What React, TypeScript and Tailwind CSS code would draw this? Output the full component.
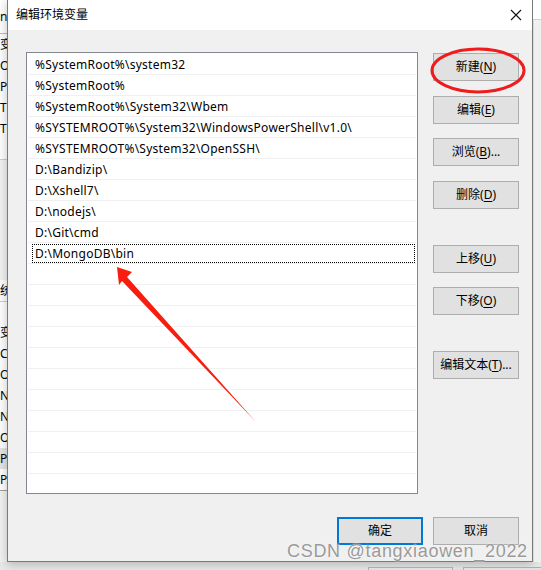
import React from 'react';

const paths = [
  '%SystemRoot%\\system32',
  '%SystemRoot%',
  '%SystemRoot%\\System32\\Wbem',
  '%SYSTEMROOT%\\System32\\WindowsPowerShell\\v1.0\\',
  '%SYSTEMROOT%\\System32\\OpenSSH\\',
  'D:\\Bandizip\\',
  'D:\\Xshell7\\',
  'D:\\nodejs\\',
  'D:\\Git\\cmd',
  'D:\\MongoDB\\bin',
];

const sideButtons = [
  { label: '新建', key: 'N', more: '', mt: 'mt-0' },
  { label: '编辑', key: 'E', more: '', mt: 'mt-[15px]' },
  { label: '浏览', key: 'B', more: '...', mt: 'mt-[14px]' },
  { label: '删除', key: 'D', more: '', mt: 'mt-[15px]' },
  { label: '上移', key: 'U', more: '', mt: 'mt-[36px]' },
  { label: '下移', key: 'O', more: '', mt: 'mt-[14px]' },
  { label: '编辑文本', key: 'T', more: '...', mt: 'mt-[36px]' },
];

const leftBits = ['变', 'Or', 'Pa', 'TE', 'TM'];
const leftBits2 = ['统', '', '变', 'Co', 'Or', 'N', 'N', 'O', 'Pa', 'PA'];

function WinButton({ label, k, more = '', primary = false, className = '' }: { label: string; k?: string; more?: string; primary?: boolean; className?: string }) {
  return (
    <div
      className={`flex h-[28px] w-[86px] items-center justify-center bg-[#e1e1e1] text-[12px] text-black ${
        primary ? 'border-2 border-[#0078d7]' : 'border border-[#adadad]'
      } ${className}`}
    >
      <span>
        {label}
        {k && (
          <>
            (<u className="underline-offset-2">{k}</u>)
          </>
        )}
        {more}
      </span>
    </div>
  );
}

export default function App() {
  return (
    <div
      className="relative flex h-[570px] w-[541px] flex-col overflow-hidden bg-[#e9e9e9]"
      style={{ fontFamily: '"Noto Sans", "Noto Sans CJK SC", sans-serif' }}
    >
      <div className="flex h-[562px]">
        {/* window behind, left edge */}
        <div className="flex w-[7px] flex-col overflow-hidden bg-white text-[12px] leading-[21px] text-black">
          <div className="h-[34px] border-b border-[#bdbdbd] pt-[6px]">n</div>
          {leftBits.map((b, i) => (
            <div key={i} className="h-[21px] whitespace-nowrap">{b}</div>
          ))}
          <div className="mt-[20px] h-px bg-[#cfcfcf]" />
          <div className="h-[120px] bg-[#f3f3f3]" />
          {leftBits2.map((b, i) => (
            <div key={i} className={`h-[21px] whitespace-nowrap ${i === 1 ? 'border-t border-[#cfcfcf]' : ''} ${i === 8 ? 'bg-[#e5e5e5]' : ''}`}>{b}</div>
          ))}
          <div className="h-px bg-[#a0a0a0]" />
          <div className="flex-1 bg-[#f3f3f3]" />
        </div>

        {/* dialog */}
        <div className="flex w-[526px] flex-col border border-t-0 border-[#7a7a7a] bg-[#f0f0f0] shadow-[0_2px_10px_rgba(0,0,0,0.25)]">
          <div className="flex h-[30px] items-center justify-between bg-white pl-[8px] pr-[8px] text-[12px] text-black">
            <span>编辑环境变量</span>
            <svg width="12" height="12" viewBox="0 0 12 12" className="mr-[2px]">
              <path d="M1 1 L11 11 M11 1 L1 11" stroke="#111" strokeWidth="1.1" fill="none" />
            </svg>
          </div>

          <div className="flex flex-col pl-[18px] pr-[13px] pt-[22px]">
            <div className="flex gap-[15px]">
              <div className="h-[442px] w-[392px] border border-[#828790] bg-white py-px pl-px pr-px">
                {Array.from({ length: 21 }).map((_, i) => (
                  <div key={i} className="h-[21px] border-b border-[#f0f0f0] pl-[4px] pr-[1px] pt-px">
                    <div
                      className={`flex h-[19px] items-center pl-[3px] text-[12px] tracking-[0.25px] text-black ${
                        i === 9 ? 'outline outline-1 outline-dotted outline-black -outline-offset-1' : ''
                      }`}
                    >
                      {paths[i] ?? ''}
                    </div>
                  </div>
                ))}
              </div>
              <div className="flex flex-col pt-px">
                {sideButtons.map((b) => (
                  <WinButton key={b.key} label={b.label} k={b.key} more={b.more} className={b.mt} />
                ))}
              </div>
            </div>
            <div className="mt-[23px] flex justify-end gap-[10px]">
              <WinButton label="确定" primary />
              <WinButton label="取消" />
            </div>
          </div>
        </div>

        {/* window behind, right edge */}
        <div className="flex flex-1 flex-col bg-[#f0f0f0]">
          <div className="h-[20px] border-b border-[#d0d0d0] bg-white" />
          <div className="flex-1 border-l border-[#d9d9d9]" />
        </div>
      </div>
      <div className="flex h-[8px] gap-[10px] pl-[368px] pt-[5px]">
        <div className="w-[85px] border border-b-0 border-[#adadad] bg-[#e1e1e1]" />
        <div className="flex-1 border border-b-0 border-r-0 border-[#adadad] bg-[#e1e1e1]" />
      </div>

      {/* annotations */}
      <svg className="pointer-events-none absolute left-0 top-0" width="541" height="570">
        <ellipse cx="478" cy="70.5" rx="46" ry="21.5" fill="none" stroke="#ee1c1c" strokeWidth="3" />
        <polygon points="117,267 132,272 127,277 257,423 122,281 119,285" fill="#f71e0f" />
      </svg>
      <div
        className="pointer-events-none absolute left-[287px] top-[538px] whitespace-nowrap text-[18px] tracking-[0.7px] text-[#9a9a9a]"
        style={{ fontFamily: '"Liberation Sans", Arial, sans-serif', textShadow: '0 0 2px #fff' }}
      >
        CSDN @tangxiaowen_2022
      </div>
    </div>
  );
}
